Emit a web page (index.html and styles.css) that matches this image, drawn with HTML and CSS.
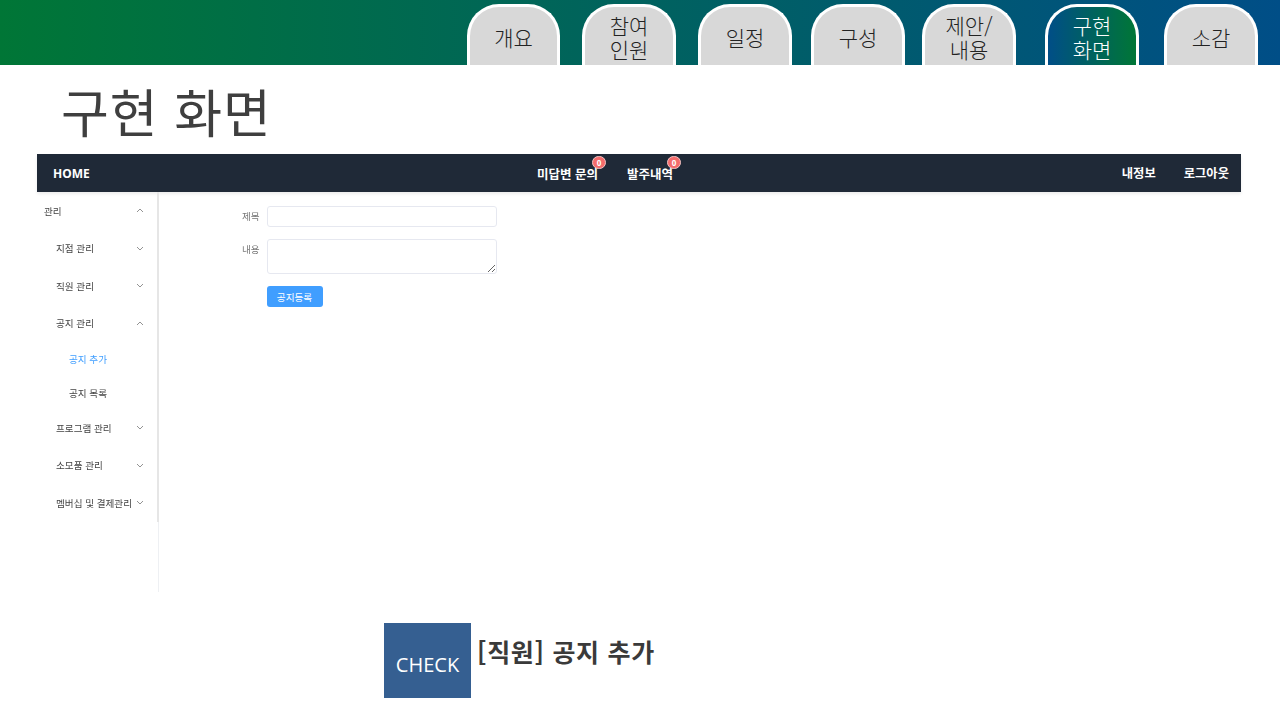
FILE: index.html
```html
<!DOCTYPE html>
<html lang="ko">
<head>
    <meta charset="UTF-8">
    <meta name="viewport" content="width=device-width, initial-scale=1.0">
    <title>구현 화면</title>
    <link rel="stylesheet" href="styles.css">
</head>
<body>
    <header class="top-band">
        <nav class="tabs">
            <a class="tab">개요</a>
            <a class="tab">참여<br>인원</a>
            <a class="tab">일정</a>
            <a class="tab">구성</a>
            <a class="tab">제안/<br>내용</a>
            <a class="tab active">구현<br>화면</a>
            <a class="tab">소감</a>
        </nav>
    </header>

    <h1 class="page-title">구현 화면</h1>

    <section class="shot">
        <div class="shot-bar">
            <span class="home">HOME</span>
            <div class="bar-center">
                <span class="bar-link">미답변 문의<i class="badge">0</i></span>
                <span class="bar-link">발주내역<i class="badge">0</i></span>
            </div>
            <div class="bar-right">
                <span>내정보</span>
                <span>로그아웃</span>
            </div>
        </div>
        <div class="shot-body">
            <aside class="side">
                <div class="side-menu">
                    <div class="menu-row lv1">관리<svg class="chev" viewBox="0 0 8 5"><path d="M1 4 4 1l3 3"/></svg></div>
                    <div class="menu-row">지점 관리<svg class="chev" viewBox="0 0 8 5"><path d="M1 1l3 3 3-3"/></svg></div>
                    <div class="menu-row">직원 관리<svg class="chev" viewBox="0 0 8 5"><path d="M1 1l3 3 3-3"/></svg></div>
                    <div class="menu-row">공지 관리<svg class="chev" viewBox="0 0 8 5"><path d="M1 4 4 1l3 3"/></svg></div>
                    <div class="sub-row on">공지 추가</div>
                    <div class="sub-row">공지 목록</div>
                    <div class="menu-row">프로그램 관리<svg class="chev" viewBox="0 0 8 5"><path d="M1 1l3 3 3-3"/></svg></div>
                    <div class="menu-row">소모품 관리<svg class="chev" viewBox="0 0 8 5"><path d="M1 1l3 3 3-3"/></svg></div>
                    <div class="menu-row">멤버십 및 결제관리<svg class="chev" viewBox="0 0 8 5"><path d="M1 1l3 3 3-3"/></svg></div>
                </div>
            </aside>
            <form class="notice-form">
                <div class="form-row">
                    <label>제목</label>
                    <input type="text" class="field">
                </div>
                <div class="form-row">
                    <label>내용</label>
                    <textarea class="field area"></textarea>
                </div>
                <div class="form-row">
                    <label></label>
                    <button type="button" class="btn">공지등록</button>
                </div>
            </form>
        </div>
    </section>

    <footer class="check-line">
        <div class="check-box">CHECK</div>
        <div class="check-text">[직원] 공지 추가</div>
    </footer>
</body>
</html>
```

FILE: styles.css
```css
* {
    box-sizing: border-box;
}

html, body {
    height: 100%;
}

body {
    margin: 0;
    background: #fff;
    overflow: hidden;
    font-family: "Noto Sans CJK KR", "Noto Sans", sans-serif;
    color: #333;
}

.top-band {
    height: 65px;
    background: linear-gradient(90deg, #007636, #004e87);
    overflow: hidden;
}

.tabs {
    display: flex;
    padding: 4px 0 0 467px;
}

.tab {
    display: flex;
    align-items: center;
    justify-content: center;
    width: 94px;
    height: 66px;
    padding-bottom: 3px;
    background: #d8d8d8;
    border: 3px solid #fff;
    border-bottom: 0;
    border-radius: 32px 32px 0 0;
    color: #222;
    font-family: "Noto Sans CJK KR", sans-serif;
    font-size: 21px;
    font-weight: 300;
    line-height: 24px;
    text-align: center;
}

.tab:nth-child(1) { width: 93px; }
.tab:nth-child(2) { margin-left: 22px; }
.tab:nth-child(3) { margin-left: 22px; }
.tab:nth-child(4) { margin-left: 19px; }
.tab:nth-child(5) { margin-left: 17px; }
.tab:nth-child(6) { margin-left: 29px; }
.tab:nth-child(7) { margin-left: 25px; }

.tab.active {
    background: linear-gradient(90deg, #004e87, #007636);
    color: #fff;
}

.page-title {
    margin: 0;
    height: 89px;
    padding-left: 61px;
    color: #3f3f3f;
    font-size: 52px;
    font-weight: 400;
    line-height: 92px;
    letter-spacing: 1px;
}

.shot {
    width: 1204px;
    height: 438px;
    margin-left: 37px;
}

.shot-bar {
    position: relative;
    display: flex;
    align-items: center;
    justify-content: space-between;
    height: 38px;
    padding: 0 12px 0 16px;
    background: #1f2937;
    color: #fff;
    font-size: 12.3px;
    font-weight: 700;
    box-shadow: 0 2px 3px rgba(0, 0, 0, 0.08);
}

.home {
    font-family: "Noto Sans", sans-serif;
    font-size: 12px;
}

.bar-center {
    position: absolute;
    left: 500px;
    top: 0;
    display: flex;
    gap: 29px;
    height: 38px;
    align-items: center;
    font-size: 12.5px;
}

.bar-link {
    position: relative;
}

.badge {
    position: absolute;
    top: -8px;
    right: -8px;
    width: 14px;
    height: 13px;
    border-radius: 7px;
    background: #f56c6c;
    border: 1px solid #f3c4c4;
    color: #fff;
    font-family: "Noto Sans", sans-serif;
    font-size: 8px;
    font-style: normal;
    font-weight: 700;
    line-height: 11px;
    text-align: center;
}

.bar-right {
    display: flex;
    gap: 28px;
}

.shot-body {
    display: flex;
    height: 400px;
}

.side {
    width: 122px;
    border-right: 1px solid #eef0f3;
}

.side-menu {
    height: 330px;
    margin-right: -1px;
    border-right: 2px solid #e6e6e6;
    filter: blur(0.3px);
}

.menu-row {
    display: flex;
    align-items: center;
    justify-content: space-between;
    height: 37.5px;
    padding: 0 13px 0 19px;
    color: #444;
    font-size: 9.6px;
    white-space: nowrap;
}

.menu-row.lv1 {
    padding-left: 7px;
}

.sub-row {
    height: 33.5px;
    padding-left: 32px;
    color: #444;
    font-size: 9.6px;
    line-height: 34px;
}

.sub-row.on {
    color: #409eff;
}

.chev {
    width: 8px;
    height: 5px;
    flex-shrink: 0;
    fill: none;
    stroke: #777;
    stroke-width: 0.8;
}

.notice-form {
    display: flex;
    flex-direction: column;
    gap: 12px;
    padding-top: 14px;
    filter: blur(0.3px);
}

.form-row {
    display: flex;
    align-items: flex-start;
}

.form-row label {
    width: 100px;
    padding-left: 83px;
    color: #777;
    font-size: 9.6px;
    line-height: 21px;
    white-space: nowrap;
}

.field {
    display: block;
    width: 230px;
    height: 21px;
    margin: 0 0 0 7.5px;
    padding: 0 6px;
    background: #fff;
    border: 1px solid #e6e8f0;
    border-radius: 3px;
    outline: none;
}

.area {
    height: 35px;
    resize: vertical;
}

.btn {
    width: 56px;
    height: 21px;
    margin-left: 7.5px;
    padding: 0;
    background: #409eff;
    border: none;
    border-radius: 3px;
    color: #fff;
    font-family: inherit;
    font-size: 9.6px;
}

.check-line {
    display: flex;
    align-items: flex-start;
    margin: 31px 0 0 384px;
}

.check-box {
    width: 87px;
    height: 75px;
    padding-top: 28px;
    background: #355f91;
    color: #fff;
    font-family: "Open Sans", sans-serif;
    font-size: 20px;
    line-height: 28px;
    text-align: center;
}

.check-text {
    margin: 9px 0 0 6px;
    color: #3a3a3a;
    font-size: 25px;
    font-weight: 700;
    line-height: 38px;
    letter-spacing: 0.7px;
}
```
